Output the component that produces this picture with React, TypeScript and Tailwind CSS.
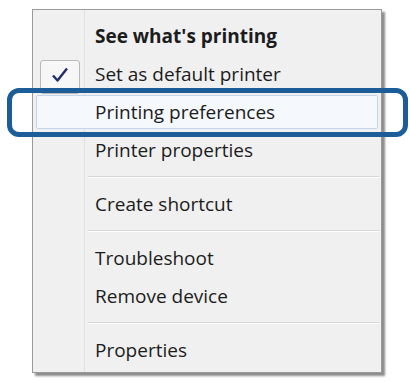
import React from 'react';

type Item = { label: string; bold?: boolean; checked?: boolean; hot?: boolean };

const groups: Item[][] = [
  [
    { label: "See what's printing", bold: true },
    { label: 'Set as default printer', checked: true },
    { label: 'Printing preferences', hot: true },
    { label: 'Printer properties' },
  ],
  [{ label: 'Create shortcut' }],
  [{ label: 'Troubleshoot' }, { label: 'Remove device' }],
  [{ label: 'Properties' }],
];

function Check() {
  return (
    <svg width="18" height="16" viewBox="0 0 18 16">
      <path d="M2 8.5 L6.5 13.5 L16 1.5" fill="none" stroke="#1f2f6e" strokeWidth="2.4" strokeLinejoin="round" />
    </svg>
  );
}

function Row({ item }: { item: Item }) {
  return (
    <div className="relative flex h-[38px] items-center">
      {item.hot && (
        <div className="absolute inset-x-[3px] inset-y-[2px] rounded-[2px] border border-[#c3d5ec] bg-[#f5f8fc]" />
      )}
      <div className="relative flex w-[53px] shrink-0 items-center justify-center self-stretch">
        {item.checked && (
          <div className="mt-[6px] flex h-[34px] w-[40px] items-start justify-center rounded-[3px] border border-[#b9b9b9] bg-[#f7f7f7] pt-[6px]">
            <Check />
          </div>
        )}
      </div>
      <span
        className={`relative pl-[9px] text-[19px] leading-none text-[#1c1c1c] ${item.bold ? 'font-bold' : ''}`}
      >
        {item.label}
      </span>
    </div>
  );
}

export default function App() {
  return (
    <div
      className="relative h-[382px] w-[410px] overflow-hidden bg-white"
      style={{ fontFamily: '"Open Sans", "Noto Sans", sans-serif' }}
    >
      <div className="ml-[32px] mt-[9px] h-[364px] w-[350px] border border-[#9a9a9a] bg-[#f0f0f0] shadow-[3px_3px_2px_rgba(0,0,0,0.45)]">
        <div className="relative h-full pt-[7px]">
          {/* icon column line */}
          <div className="absolute bottom-0 left-[51px] top-0 w-[2px] border-l border-[#e0e0e0] border-r-white" />
          {groups.map((g, gi) => (
            <div key={gi}>
              {gi > 0 && (
                <div className="flex h-[16px] items-center pl-[55px] pr-[2px]">
                  <div className="h-[2px] w-full border-t border-[#d7d7d7] bg-white" />
                </div>
              )}
              {g.map((it) => (
                <Row key={it.label} item={it} />
              ))}
            </div>
          ))}
        </div>
      </div>
      {/* callout outline */}
      <div className="absolute left-[7px] top-[88px] h-[49px] w-[401px] rounded-[12px] border-[5px] border-[#1b5c99]" />
    </div>
  );
}
